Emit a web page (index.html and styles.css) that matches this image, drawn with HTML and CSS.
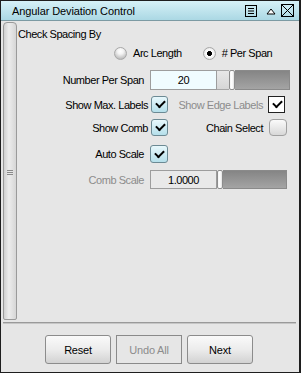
FILE: index.html
```html
<!DOCTYPE html>
<html>
<head>
<meta charset="utf-8">
<link rel="stylesheet" href="styles.css">
</head>
<body>
<div class="window">
  <div class="titlebar">
    <span class="title">Angular Deviation Control</span>
    <div class="tb-icons">
      <svg class="ic-menu" width="12" height="12" viewBox="0 0 12 12"><rect x="0.5" y="0.5" width="11" height="11" fill="none" stroke="#000"/><path d="M3 3.5h6M3 6h6M3 8.5h6" stroke="#000"/></svg>
      <svg class="ic-up" width="10" height="8" viewBox="0 0 10 8"><path d="M1 7 L5 2 L9 7 Z" fill="#fff" stroke="#000"/></svg>
      <svg class="ic-close" width="13" height="13" viewBox="0 0 13 13"><rect x="0.5" y="0.5" width="12" height="12" fill="none" stroke="#000"/><path d="M1 1L12 12M12 1L1 12" stroke="#000"/></svg>
    </div>
  </div>
  <div class="main">
    <div class="splitter"><span class="grip"></span></div>
    <div class="content">
      <div class="row r1"><span class="heading">Check Spacing By</span></div>
      <div class="row r2">
        <span class="radio"></span><span class="rlbl">Arc Length</span>
        <span class="radio on"></span><span class="rlbl">#&nbsp;Per Span</span>
      </div>
      <div class="row r3">
        <span class="lbl">Number Per Span</span>
        <div class="slidebox">
          <span class="field light">20</span>
          <span class="fill"></span><span class="knob"></span><span class="track"></span>
        </div>
      </div>
      <div class="row r4">
        <span class="lbl wide">Show Max. Labels</span>
        <span class="check on"></span>
        <span class="lbl2 dis">Show Edge Labels</span>
        <span class="check flat on"></span>
      </div>
      <div class="row r5">
        <span class="lbl wide">Show Comb</span>
        <span class="check on"></span>
        <span class="lbl2">Chain Select</span>
        <span class="check off"></span>
      </div>
      <div class="row r6">
        <span class="lbl">Auto Scale</span>
        <span class="check on big"></span>
      </div>
      <div class="row r7">
        <span class="lbl dis">Comb Scale</span>
        <div class="slidebox">
          <span class="field gray">1.0000</span>
          <span class="knob"></span><span class="track"></span>
        </div>
      </div>
    </div>
  </div>
  <div class="sep"></div>
  <div class="footer">
    <button class="btn">Reset</button>
    <button class="btn disabled">Undo All</button>
    <button class="btn">Next</button>
  </div>
</div>
</body>
</html>
```
FILE: styles.css
```css
* { box-sizing: border-box; }
html, body { margin: 0; padding: 0; }
body {
  width: 301px; height: 373px;
  font-family: "Liberation Sans", Arial, sans-serif;
  font-size: 11px;
  color: #000;
  background: #fff;
}
.window {
  width: 301px; height: 373px;
  border: 1px solid #1e1e1e;
  border-right-width: 2px;
  background: #e6e6e6;
  display: flex; flex-direction: column;
}
.titlebar {
  height: 20px; flex: none;
  background: linear-gradient(#d6f1f7, #abd8e4);
  border-bottom: 1px solid #7c9aa3;
  display: flex; align-items: center;
  padding-left: 11px;
}
.title { font-size: 11px; letter-spacing: -0.1px; flex: 1; padding-top: 1px; }
.tb-icons { display: flex; align-items: center; padding-right: 5px; }
.ic-menu { margin-right: 9px; }
.ic-up { margin-right: 5px; }
.main { display: flex; height: 300px; flex: none; }
.splitter {
  flex: none;
  width: 14px; margin: 1px 0 0 2px; height: 298px;
  background: linear-gradient(90deg, #d0d0d0, #ececec 40%, #d6d6d6);
  border: 1px solid #9a9a9a;
  border-radius: 4px 4px 2px 2px;
  display: flex; align-items: center; justify-content: center;
}
.grip {
  width: 6px; height: 5px;
  border-top: 1px solid #8a8a8a; border-bottom: 1px solid #8a8a8a;
  position: relative; margin-left: -1px; margin-top: 3px;
}
.grip::after { content: ""; position: absolute; left: 0; right: 0; top: 1px; height: 1px; background: #8a8a8a; }
.content { flex: 1; padding-left: 1px; display: flex; flex-direction: column; }
.row { display: flex; align-items: center; letter-spacing: -0.45px; }
.r1 { height: 14px; margin-top: 6px; }
.r2 { height: 14px; margin-top: 5px; }
.r3 { height: 20px; margin-top: 10px; }
.r4 { height: 17px; margin-top: 6px; }
.r5 { height: 17px; margin-top: 6px; }
.r6 { height: 18px; margin-top: 9px; }
.r7 { height: 19px; margin-top: 7px; }
.radio {
  width: 13px; height: 13px; border-radius: 50%;
  border: 1px solid #a8a8a8;
  background: radial-gradient(circle at 50% 30%, #ffffff 0, #f4f4f4 30%, #bcbcbc 80%);
  margin-left: 96px; flex: none;
}
.radio.on {
  margin-left: 21px;
  background: radial-gradient(circle, #000 0 2.2px, #fff 2.8px, #f2f2f2 60%, #c8c8c8 100%);
}
.rlbl { margin-left: 6px; }
.lbl { width: 126px; text-align: right; flex: none; }
.lbl.wide { width: 130px; }
.dis { color: #8c8c8c; }
.slidebox { display: flex; margin-left: 6px; height: 20px; }
.r7 .slidebox { height: 19px; }
.field {
  width: 67px; height: 100%;
  border: 1px solid #9d9d9d;
  display: flex; align-items: center; justify-content: center;
}
.field.light { background: #f0fcff; }
.field.gray { background: #e9e9e9; }
.fill { width: 12px; background: linear-gradient(#e8e8e8, #d6d6d6); border-top: 1px solid #a6a6a6; border-bottom: 1px solid #a6a6a6; }
.knob {
  width: 6px; height: 100%;
  background: linear-gradient(90deg, #f4f4f4, #ffffff 50%, #e0e0e0);
  border: 1px solid #8d8d8d; border-radius: 2px;
}
.track {
  width: 55px; height: 100%;
  background: linear-gradient(#858585, #a4a4a4);
  border: 1px solid #8a8a8a; border-left: none;
}
.r7 .track { width: 64px; }
.check {
  width: 17px; height: 17px; flex: none;
  border: 1px solid #6c8a94; border-radius: 3px;
  background: linear-gradient(#e8f8fc, #b5dfea);
  margin-left: 3px;
  position: relative;
}
.check.big { width: 18px; height: 18px; margin-left: 6px; }
.check.on::after {
  content: ""; position: absolute; left: 4px; top: 3px;
  width: 7px; height: 4px;
  border-left: 2px solid #000; border-bottom: 2px solid #000;
  transform: rotate(-45deg); transform-origin: center;
}
.check.big.on::after { left: 4px; top: 4px; }
.check.flat { background: #fff; border-color: #222; border-radius: 0; margin-left: 5px; }
.check.off { background: linear-gradient(#fafafa, #d8d8d8); border-color: #a0a0a0; border-radius: 4px; width: 18px; margin-left: 6px; }
.lbl2 { flex: none; width: 95px; text-align: right; }
.sep { height: 2px; margin: 1px 3px 0 2px; border-top: 1px solid #9a9a9a; border-bottom: 1px solid #c6c6c6; }
.footer { display: flex; padding: 11px 0 0 44px; gap: 5px; }
.btn {
  width: 66px; height: 29px; padding: 0;
  font-family: "Liberation Sans", Arial, sans-serif; font-size: 11px; letter-spacing: -0.2px;
  color: #000;
  border: 1px solid #8c8c8c; border-radius: 3px;
  background: linear-gradient(#fafafa, #ececec 50%, #d2d2d2);
}
.btn.disabled { color: #8c8c8c; background: #e6e6e6; border-color: #8a8a8a; border-radius: 0; }
```
